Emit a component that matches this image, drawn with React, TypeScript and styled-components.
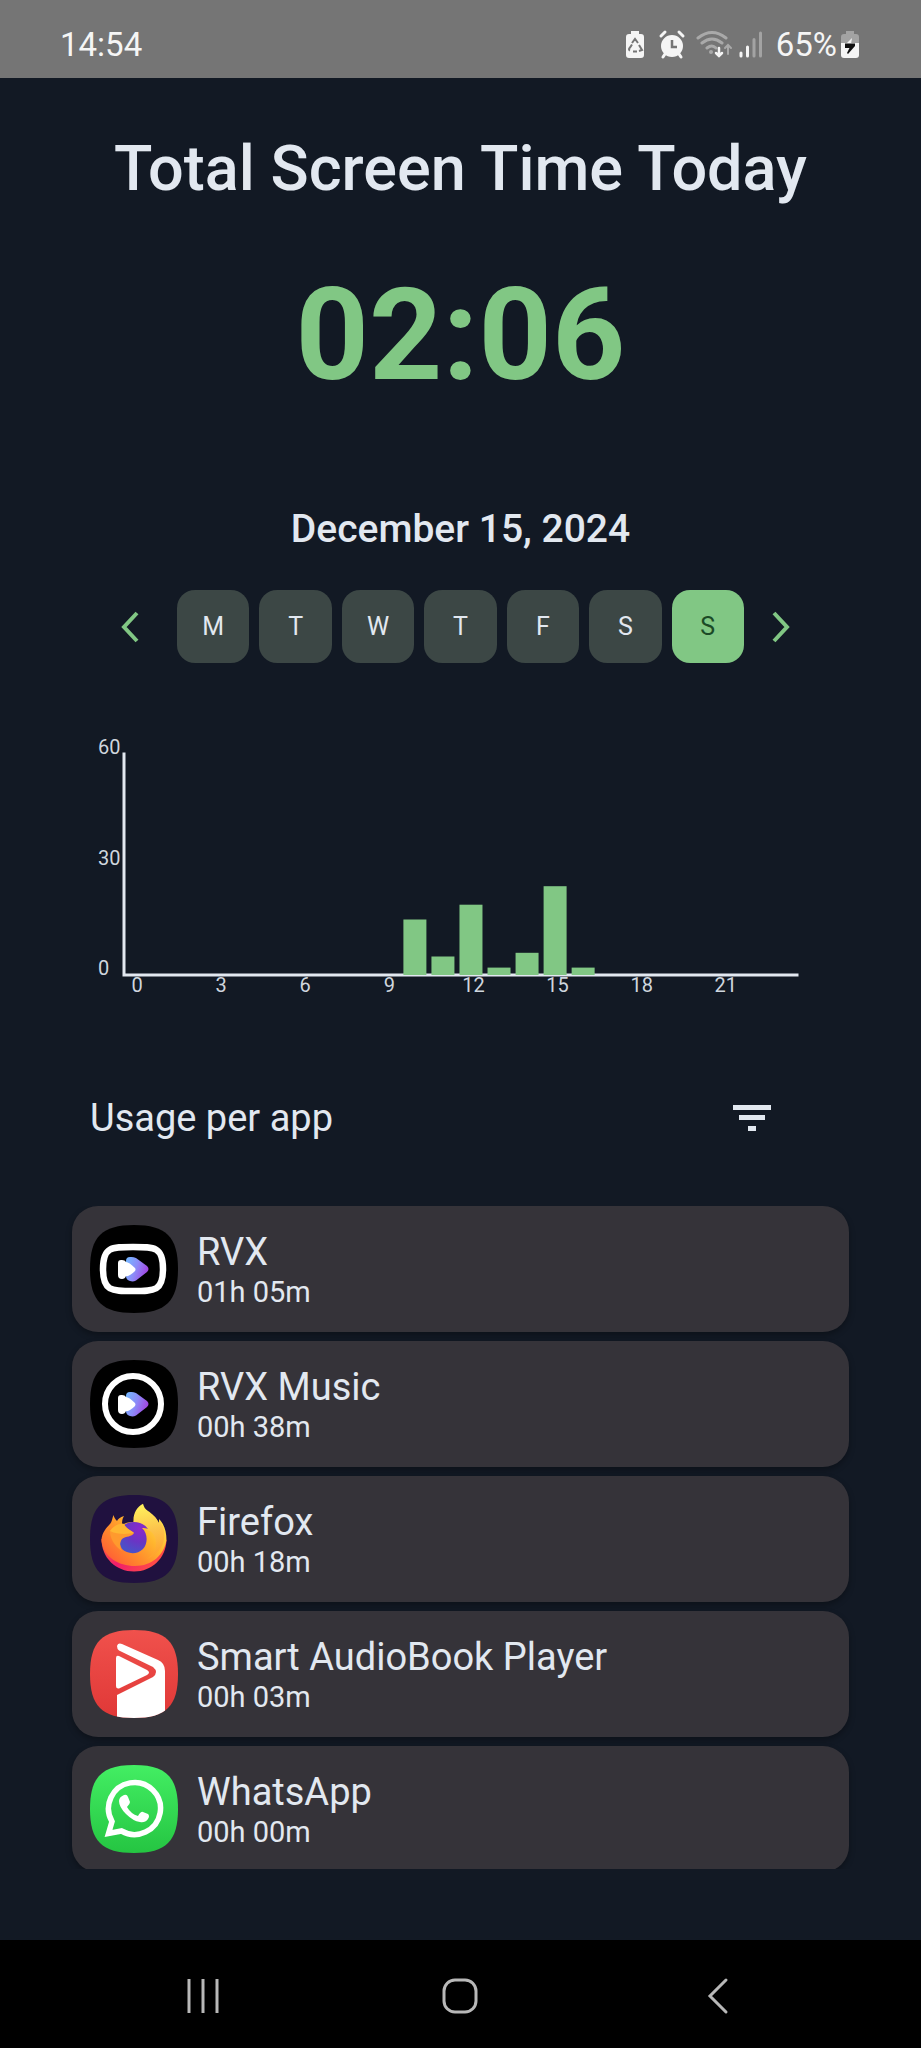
import React, { useState } from "react";
import styled, { createGlobalStyle } from "styled-components";

const GlobalStyle = createGlobalStyle`
  *, *::before, *::after { box-sizing: border-box; }
  html, body { margin: 0; background: #121924; }
  body, button { font-family: Roboto, "Liberation Sans", sans-serif; }
  button { border: 0; padding: 0; background: none; color: inherit; cursor: pointer; }
  h1, h2, p, ul { margin: 0; padding: 0; font-weight: 400; }
  svg { display: block; flex: none; }
`;

const Screen = styled.div`
  display: flex;
  flex-direction: column;
  height: 100vh;
  background: #121924;
  color: #e2e8f0;
`;

const StatusBar = styled.header`
  display: flex;
  align-items: center;
  justify-content: space-between;
  flex: none;
  height: 78px;
  padding: 12px 59px 0 60px;
  background: #757575;
  color: #f5f5f5;
  font-size: 33px;
  line-height: 40px;
`;

const StatusIcons = styled.div`
  display: flex;
  align-items: center;
`;

const Main = styled.main`
  display: flex;
  flex-direction: column;
  flex: 1;
  min-height: 0;
  padding: 53px 72px 71px;
`;

const Title = styled.h1`
  text-align: center;
  font-size: 63px;
  line-height: 76px;
  font-weight: 500;
`;

const TotalTime = styled.p`
  margin-top: 52px;
  text-align: center;
  font-size: 128px;
  line-height: 152px;
  font-weight: 700;
  color: #81c784;
`;

const DateLabel = styled.h2`
  margin-top: 94px;
  text-align: center;
  font-size: 39px;
  line-height: 48px;
  font-weight: 500;
`;

const WeekRow = styled.div`
  display: flex;
  align-items: center;
  gap: 17px;
  margin: 37px 48px 0;
`;

const ArrowButton = styled.button`
  flex: none;
  width: 40px;
  height: 40px;
`;

const Days = styled.div`
  display: flex;
  flex: 1;
  gap: 10px;
`;

const DayButton = styled.button<{ $selected: boolean }>`
  flex: 1;
  height: 73px;
  border-radius: 18px;
  font-size: 25px;
  line-height: 32px;
  background: ${(p) => (p.$selected ? "#81c784" : "#3c4745")};
  color: ${(p) => (p.$selected ? "#1b4a26" : "#e2e8f0")};
`;

const Chart = styled.svg`
  width: auto;
  height: auto;
  margin: 66px 48px 0 20px;
  font-family: Roboto, "Liberation Sans", sans-serif;
  font-size: 20px;
  fill: #cfd6de;
`;

const UsageHeader = styled.div`
  display: flex;
  align-items: center;
  justify-content: space-between;
  margin-top: 85px;
  padding: 0 68px 0 18px;
`;

const UsageTitle = styled.h2`
  font-size: 38px;
  line-height: 56px;
`;

const FilterButton = styled.button`
  width: 56px;
  height: 56px;
`;

const AppList = styled.ul`
  display: flex;
  flex-direction: column;
  flex: 1;
  gap: 9px;
  min-height: 0;
  margin: 60px -16px 0;
  padding: 0 16px;
  overflow-y: auto;
  scrollbar-width: none;
  list-style: none;
`;

const AppCard = styled.li`
  display: flex;
  align-items: center;
  flex: none;
  gap: 19px;
  height: 126px;
  padding: 0 18px;
  border-radius: 26px;
  background: #353339;
  box-shadow: 0 3px 6px rgba(0, 0, 0, 0.3);
`;

const AppText = styled.div`
  padding-top: 2px;
`;

const AppName = styled.p`
  font-size: 38px;
  line-height: 44px;
`;

const AppTime = styled.p`
  font-size: 29px;
  line-height: 36px;
`;

const NavBar = styled.nav`
  display: flex;
  align-items: center;
  justify-content: space-around;
  flex: none;
  height: 108px;
  padding: 4px 74px 0;
  background: #000;
`;

const NavButton = styled.button`
  display: flex;
  justify-content: center;
  width: 96px;
`;

function SystemIcons() {
  return (
    <svg width="138" height="32" viewBox="0 0 138 32" fill="none" aria-hidden="true">
      <path d="M7 2h8v3h2q3 0 3 3v18q0 3-3 3H5q-3 0-3-3V8q0-3 3-3h2z" fill="#f5f5f5" />
      <g stroke="#757575" strokeWidth="2">
        <path d="M8 14l3-4 3 4M15 16l3 5-3 1M13 22.500H9M6 21.500q-2-1 0-3l2-3" />
      </g>
      <g stroke="#f5f5f5" strokeLinecap="round" strokeWidth="3">
        <circle cx="48" cy="17" r="9.500" fill="#f5f5f5" />
        <path d="M37 7l4-4M59 7l-4-4M41 25l-2 3M55 25l2 3" />
      </g>
      <path d="M48 11v7h5" stroke="#757575" strokeWidth="2.500" />
      <g stroke="#a9a9a9" strokeWidth="3" strokeLinecap="round">
        <path d="M74 9q14-11 28 0M78 14q10-8 20 0M83 19q5-4 9 0" />
        <path d="M104 25v-8M101 19l3-3 3 3" strokeWidth="2" />
      </g>
      <circle cx="87" cy="23" r="2" fill="#a9a9a9" />
      <path d="M95 19v8M92 24l3 3 3-3" stroke="#f5f5f5" strokeWidth="2.500" strokeLinecap="round" />
      <g strokeWidth="3" strokeLinecap="round">
        <path d="M117 24v3M123.500 18v9" stroke="#f5f5f5" />
        <path d="M130 10.500v16.500M136.500 4v23" stroke="#a3a3a3" />
      </g>
    </svg>
  );
}

const Percent = styled.span`
  margin-left: 14px;
`;

function BatteryIcon() {
  return (
    <svg width="25" height="32" viewBox="0 0 25 32" aria-hidden="true">
      <path d="M9 2h8v3h2q3 0 3 3v6H4V8q0-3 3-3h2z" fill="#a3a3a3" />
      <path d="M4 14h18v12q0 3-3 3H7q-3 0-3-3z" fill="#f5f5f5" />
      <path d="M15 9l-6 6h5z" fill="#f5f5f5" />
      <path d="M8 14.500h10v2.500l-7 8-1-1 2.500-5H8z" fill="#111" />
    </svg>
  );
}

const usageByHour: { hour: number; minutes: number }[] = [
  { hour: 10, minutes: 15 },
  { hour: 11, minutes: 5 },
  { hour: 12, minutes: 19 },
  { hour: 13, minutes: 2 },
  { hour: 14, minutes: 6 },
  { hour: 15, minutes: 24 },
  { hour: 16, minutes: 2 },
];

function UsageChart() {
  const left = 28;
  const base = 246;
  const step = 28.04;
  const perMinute = 3.7;
  return (
    <Chart viewBox="0 0 709 276" role="img" aria-label="Minutes used per hour">
      <path d="M32 25V246H705" fill="none" stroke="#e2e8f0" strokeWidth="3" strokeLinecap="square" />
      {[60, 30, 0].map((v) => (
        <text key={v} x="6" y={base - v * 3.68}>{v}</text>
      ))}
      {usageByHour.map(({ hour, minutes }) => (
        <rect
          key={hour}
          x={left + hour * step + 3}
          y={base - minutes * perMinute}
          width="23"
          height={minutes * perMinute}
          fill="#81c784"
        />
      ))}
      {[0, 3, 6, 9, 12, 15, 18, 21].map((h) => (
        <text key={h} x={left + h * step + 17} y="263" textAnchor="middle">{h}</text>
      ))}
    </Chart>
  );
}

const SQUIRCLE = "M44 0C76 0 88 12 88 44S76 88 44 88 0 76 0 44 12 0 44 0Z";

function PlayMark() {
  return (
    <>
      <path d="M36 36Q36 32 40 32Q43 31.500 46 33L57 41Q60 44 57 47L46 55.500Q43 57 40 56Q36 55 36 51Z" fill="url(#playFill)" />
      <path d="M28 38Q28 34.500 32 35Q35 35 36 37Q39 37 45 43Q46 44.500 45 46Q39 52 36 51Q35 54 32 54Q28 54 28 50Z" fill="#fff" />
    </>
  );
}

function AppIcon({ name }: { name: string }) {
  return (
    <svg width="88" height="88" viewBox="0 0 88 88" fill="none" aria-hidden="true">
      {name === "RVX" && (
        <>
          <defs>
            <linearGradient id="playFill" x1="36" y1="38" x2="59" y2="46" gradientUnits="userSpaceOnUse">
              <stop stopColor="#76b4ff" />
              <stop offset=".45" stopColor="#8c8cf8" />
              <stop offset="1" stopColor="#a33ee0" />
            </linearGradient>
          </defs>
          <path d={SQUIRCLE} fill="#000" />
          <path d="M43 22C65 22 73 22 73 44S65 66 43 66 13 66 13 44 21 22 43 22Z" stroke="#fff" strokeWidth="6.500" />
          <PlayMark />
        </>
      )}
      {name === "RVX Music" && (
        <>
          <path d={SQUIRCLE} fill="#000" />
          <circle cx="43" cy="44" r="28" stroke="#fff" strokeWidth="6" />
          <PlayMark />
        </>
      )}
      {name === "Firefox" && (
        <>
          <defs>
            <linearGradient id="foxBase" x1="12" y1="50" x2="60" y2="76" gradientUnits="userSpaceOnUse">
              <stop stopColor="#ff5a3c" />
              <stop offset=".4" stopColor="#f01d6c" />
              <stop offset="1" stopColor="#ff4a48" />
            </linearGradient>
            <linearGradient id="foxBody" x1="70" y1="24" x2="26" y2="68" gradientUnits="userSpaceOnUse">
              <stop stopColor="#ffe14a" />
              <stop offset=".35" stopColor="#ffb52e" />
              <stop offset=".7" stopColor="#ff8a2c" />
              <stop offset="1" stopColor="#ff6434" />
            </linearGradient>
            <linearGradient id="foxTail" x1="54" y1="10" x2="62" y2="60" gradientUnits="userSpaceOnUse">
              <stop stopColor="#fff05c" />
              <stop offset=".5" stopColor="#fcc44c" />
              <stop offset="1" stopColor="#ffa52e" />
            </linearGradient>
            <radialGradient id="foxGlobe" cx="50" cy="34" r="24" gradientUnits="userSpaceOnUse">
              <stop stopColor="#8c28cc" />
              <stop offset=".55" stopColor="#6a35c4" />
              <stop offset="1" stopColor="#4b50c8" />
            </radialGradient>
          </defs>
          <path d={SQUIRCLE} fill="#20113f" />
          <path d="M11.500 44C11.500 63 26 76.500 44 76.500C62 76.500 76 63 76.500 45Z" fill="url(#foxBase)" />
          <path d="M23.500 20C22 24 22 27 20 29C14 35 11.500 40 11.500 46C14 62 28 71 45 71C62 71 74 60 76.500 45C76.500 36 74 29 69 24V28C66 22 61 20 43 27C38 27 35 28 32 30C32 27 32 24 34 21C30 22 28 24 27 26C25 24 24 22 23.500 20Z" fill="url(#foxBody)" />
          <path d="M53 8.700C47 12 43 18 43.500 27C50 27 54 29 57 35C63 36 68 43 65 54C63 59 60 62 57 64C66 60 73 53 74 44C75 37 74 31 69 26V29C67 22 61 18 58 16C55 14 54 12 53 8.700Z" fill="url(#foxTail)" />
          <path d="M33 31C37 27 44 26 50 28C53 29 56 31 58 34C56 33 54 33 52 33C58 38 58 49 53 54C47 60 37 59 32 54C28 48 29 37 33 31Z" fill="url(#foxGlobe)" />
          <path d="M20 36C23 31 29 28 34 29C36 34 41 35 44 38C42 42 36 41 32 44C30 47 29 51 32 56C24 51 20 43 20 36Z" fill="#ff9a2e" />
          <path d="M20 36C23 31 29 28 34 29C36 34 41 35 44 38C38 39 28 40 20 36Z" fill="#ffb632" />
        </>
      )}
      {name === "Smart AudioBook Player" && (
        <>
          <defs>
            <clipPath id="bookClip"><path d={SQUIRCLE} /></clipPath>
            <linearGradient id="bookFill" x1="0" y1="0" x2="0" y2="88" gradientUnits="userSpaceOnUse">
              <stop stopColor="#f0514c" />
              <stop offset="1" stopColor="#e03837" />
            </linearGradient>
          </defs>
          <g clipPath="url(#bookClip)">
            <path d="M0 0H88V88H0Z" fill="url(#bookFill)" />
            <path d="M27 16Q28 12.500 32 14L68 30Q75 33 75 41V88H27V65L63 47Q69 42 63 37L29 20.500Q27 19 27 16Z" fill="#fff" />
            <path d="M26 28Q26 25 29 26L57 40Q61 42.500 57 45L29 58.500Q26 59 26 56Z" fill="#fff" />
          </g>
        </>
      )}
      {name === "WhatsApp" && (
        <>
          <defs>
            <linearGradient id="waFill" x1="0" y1="0" x2="0" y2="88" gradientUnits="userSpaceOnUse">
              <stop stopColor="#43ee63" />
              <stop offset="1" stopColor="#25c542" />
            </linearGradient>
          </defs>
          <path d={SQUIRCLE} fill="url(#waFill)" />
          <path d="M18.500 68.500L22 56.500A26 26 0 1 1 31.500 66Z" stroke="#fff" strokeWidth="5.500" />
          <path d="M34 30Q37 29 38 32L40 37Q40 39 37 42Q41 49 48 51Q51 46 53 47L58 49Q60 51 58 54Q55 58 50 57Q43 56 36 49Q29 42 29 36Q29 32 34 30Z" fill="#fff" />
        </>
      )}
    </svg>
  );
}

const days = ["M", "T", "W", "T", "F", "S", "S"];
const dayNames = ["Monday", "Tuesday", "Wednesday", "Thursday", "Friday", "Saturday", "Sunday"];

const apps = [
  { name: "RVX", time: "01h 05m" },
  { name: "RVX Music", time: "00h 38m" },
  { name: "Firefox", time: "00h 18m" },
  { name: "Smart AudioBook Player", time: "00h 03m" },
  { name: "WhatsApp", time: "00h 00m" },
];

export default function App() {
  const [selected, setSelected] = useState(6);
  return (
    <Screen>
      <GlobalStyle />
      <StatusBar>
        <span>14:54</span>
        <StatusIcons>
          <SystemIcons />
          <Percent>65%</Percent>
          <BatteryIcon />
        </StatusIcons>
      </StatusBar>
      <Main>
        <Title>Total Screen Time Today</Title>
        <TotalTime>02:06</TotalTime>
        <DateLabel>December 15, 2024</DateLabel>
        <WeekRow>
          <ArrowButton aria-label="Previous week">
            <svg width="40" height="40" viewBox="0 0 40 40" fill="none">
              <path d="M17 6L4 20l13 14" stroke="#81c784" strokeWidth="4" />
            </svg>
          </ArrowButton>
          <Days>
            {days.map((d, i) => (
              <DayButton
                key={dayNames[i]}
                $selected={i === selected}
                aria-label={dayNames[i]}
                aria-pressed={i === selected}
                onClick={() => setSelected(i)}
              >
                {d}
              </DayButton>
            ))}
          </Days>
          <ArrowButton aria-label="Next week">
            <svg width="40" height="40" viewBox="0 0 40 40" fill="none">
              <path d="M13 6l13 14-13 14" stroke="#81c784" strokeWidth="4" />
            </svg>
          </ArrowButton>
        </WeekRow>
        <UsageChart />
        <UsageHeader>
          <UsageTitle>Usage per app</UsageTitle>
          <FilterButton aria-label="Sort apps">
            <svg width="56" height="56" viewBox="0 0 56 56" fill="#e2e8f0">
              <path d="M8 15h38v5H8zM14 25h26v5H14zM23 36h8v5h-8z" />
            </svg>
          </FilterButton>
        </UsageHeader>
        <AppList>
          {apps.map((app) => (
            <AppCard key={app.name}>
              <AppIcon name={app.name} />
              <AppText>
                <AppName>{app.name}</AppName>
                <AppTime>{app.time}</AppTime>
              </AppText>
            </AppCard>
          ))}
        </AppList>
      </Main>
      <NavBar>
        <NavButton aria-label="Recent apps">
          <svg width="40" height="40" viewBox="0 0 40 40" stroke="#b8b8b8" strokeWidth="3">
            <path d="M6 3v34M20 3v34M34 3v34" />
          </svg>
        </NavButton>
        <NavButton aria-label="Home">
          <svg width="40" height="40" viewBox="0 0 40 40" fill="none" stroke="#b8b8b8" strokeWidth="3">
            <rect x="4" y="4" width="32" height="32" rx="11" />
          </svg>
        </NavButton>
        <NavButton aria-label="Back">
          <svg width="40" height="40" viewBox="0 0 40 40" fill="none" stroke="#b8b8b8" strokeWidth="3" strokeLinecap="round">
            <path d="M28 4L12 20l16 16" />
          </svg>
        </NavButton>
      </NavBar>
    </Screen>
  );
}
